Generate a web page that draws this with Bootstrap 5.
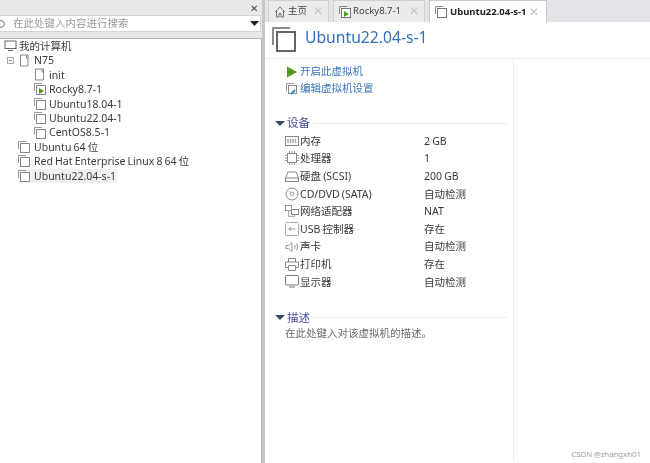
<!DOCTYPE html>
<html lang="zh"><head><meta charset="utf-8"><title>Ubuntu22.04-s-1</title>
<link href="https://cdn.jsdelivr.net/npm/bootstrap@5.3.0/dist/css/bootstrap.min.css" rel="stylesheet">
<style>
html,body{height:463px;overflow:hidden}
body{font-family:"Noto Sans","Noto Sans CJK SC",sans-serif;font-size:10.5px;line-height:14.4px;color:#3a3a3a;background:#e6e8ea;position:relative;word-spacing:-.6px}
svg{flex:none;display:block}
.shell{height:463px;filter:blur(.3px)}
.leftpane{width:262px;flex:none}
.closebar{height:15px;padding-right:4px;color:#444;font-size:10px;line-height:12px}
.searchbox{height:17px;background:#fff;border:1px solid #d2d4d6;border-left:0;margin-right:1px;color:#9a9a9a;font-size:10.5px;padding:0 1px 0 0}
.treebox{margin-top:6px;background:#fff;border:1px solid #b4b6b8;border-left:0;border-bottom:0;height:425px}
.trow{height:14.4px;white-space:nowrap}
.ind1{padding-left:4px}.ind3{padding-left:34px}.ind4{padding-left:18px}
.tg{margin-right:2px}
.tg0{margin-right:0}
.tg1{margin-right:1px}
.tlabel{margin-left:2px}
.selrow{background:#f0f0f0;width:99px;margin-left:18px}
.rightpane{width:388px;flex:none;border-left:3px solid #c4c6c8}
.tabbar{height:22px;padding-left:3px;gap:4px;background:#e2e4e7}
.tabitem{height:22px;background:#e9ebed;border:1px solid #cfd1d3;border-bottom:0;padding:0 5px;font-size:9.5px;color:#444;white-space:nowrap}
.tabactive{background:#fff;font-weight:700;color:#222;height:23px;border-color:#c8cacc;position:relative;z-index:2;padding-right:7px}
.tw1{width:61px}.tw2{width:92px}.tw3{width:118px}
.tabico{margin-right:2px}
.tabactive .tabico{margin-right:3px}
.tabx{color:#c6c6c6;font-size:12px;font-weight:400;margin-left:auto}
.mainpane{background:#fff;height:441px}
.headarea{height:37px;border-bottom:1px solid #ececec;padding:5px 0 0 7px;gap:9px}
.vmtitle{font-size:15.7px;color:#2f70b8;line-height:20px}
.bodycols{height:403px}
.infocol{width:249px;flex:none;border-right:1px solid #ececec;padding:4px 0 0 10px}
.actlink{height:17px;color:#3a76b8;gap:2px;padding-left:11px}
.secthead{color:#4b4a9e;font-size:11.5px;height:16px}
.secthead::after{content:"";flex:1;height:1px;background:#ececec;margin-left:3px;margin-right:6px}
.caret{width:0;height:0;border-left:5px solid transparent;border-right:5px solid transparent;border-top:5px solid #3c4a5c;margin-right:2px}
.devrow{height:17.65px;padding-left:10px;gap:1px}
.devname{width:123px;flex:none;white-space:nowrap}
.devico{width:14px;display:flex;justify-content:center}
.desctext{padding-left:10px;color:#6a6a6a}
.sec1{margin-top:18px}.sec2{margin-top:19px}
.devlist{margin-top:1px}
.stamp{position:absolute;right:9px;bottom:3px;font-size:7.8px;line-height:12px;color:#a0a0a0}
</style></head>
<body>
<div class="shell d-flex">
 <div class="leftpane d-flex flex-column">
  <div class="closebar d-flex justify-content-end align-items-center"><span>✕</span></div>
  <div class="searchbox d-flex align-items-center">
    <svg width="13" height="12" viewBox="0 0 13 12"><circle cx="1" cy="6" r="3.400" fill="none" stroke="#777"/></svg>
    <span>在此处键入内容进行搜索</span>
    <svg width="9" height="5" viewBox="0 0 9 5" class="ms-auto"><path d="M0 0h9L4.500 5z" fill="#222"/></svg>
  </div>
  <div class="treebox">
    <div class="trow d-flex align-items-center ind1">
      <svg class="tg1" width="14" height="12" viewBox="0 0 14 12"><rect x="1" y="1" width="11" height="7.500" fill="none" stroke="#666"/><path d="M4 10.500h5" stroke="#666"/></svg><span>我的计算机</span></div>
    <div class="trow d-flex align-items-center">
      <svg width="20" height="12" viewBox="0 0 20 12"><rect x="7.500" y="2.500" width="6" height="6" fill="none" stroke="#aaa"/><path d="M9 5.500h3" stroke="#888"/></svg>
      <svg class="tg0" width="12" height="13" viewBox="0 0 12 13"><path d="M.5 1h7.500v11H.5zM6.500 1v3H8" fill="none" stroke="#888"/></svg><span class="tlabel">N75</span></div>
    <div class="trow d-flex align-items-center ind3"><svg class="tg1" width="12" height="13" viewBox="0 0 12 13"><path d="M1.500 1h8v11h-8zM8 1v3h1.500" fill="none" stroke="#888"/></svg><span class="tlabel">init</span></div>
    <div class="trow d-flex align-items-center ind3"><svg class="tg1" width="12" height="12" viewBox="0 0 12 12"><path d="M.5 8V.5H8" fill="none" stroke="#999"/><rect x="2.500" y="2.500" width="9" height="9" fill="#fff" stroke="#888"/><path d="M5 5l5 3-5 3z" fill="#4c9a1e"/></svg><span class="tlabel">Rocky8.7-1</span></div>
    <div class="trow d-flex align-items-center ind3"><svg class="tg1" width="12" height="12" viewBox="0 0 12 12"><path d="M.5 8V.5H8" fill="none" stroke="#999"/><rect x="2.500" y="2.500" width="9" height="9" fill="#fff" stroke="#888"/></svg><span class="tlabel">Ubuntu18.04-1</span></div>
    <div class="trow d-flex align-items-center ind3"><svg class="tg1" width="12" height="12" viewBox="0 0 12 12"><path d="M.5 8V.5H8" fill="none" stroke="#999"/><rect x="2.500" y="2.500" width="9" height="9" fill="#fff" stroke="#888"/></svg><span class="tlabel">Ubuntu22.04-1</span></div>
    <div class="trow d-flex align-items-center ind3"><svg class="tg1" width="12" height="12" viewBox="0 0 12 12"><path d="M.5 8V.5H8" fill="none" stroke="#999"/><rect x="2.500" y="2.500" width="9" height="9" fill="#fff" stroke="#888"/></svg><span class="tlabel">CentOS8.5-1</span></div>
    <div class="trow d-flex align-items-center ind4"><svg class="tg" width="12" height="12" viewBox="0 0 12 12"><path d="M.5 8V.5H8" fill="none" stroke="#999"/><rect x="2.500" y="2.500" width="9" height="9" fill="#fff" stroke="#888"/></svg><span class="tlabel">Ubuntu 64 位</span></div>
    <div class="trow d-flex align-items-center ind4"><svg class="tg" width="12" height="12" viewBox="0 0 12 12"><path d="M.5 8V.5H8" fill="none" stroke="#999"/><rect x="2.500" y="2.500" width="9" height="9" fill="#fff" stroke="#888"/></svg><span class="tlabel">Red Hat Enterprise Linux 8 64 位</span></div>
    <div class="trow d-flex align-items-center selrow"><svg class="tg" width="12" height="12" viewBox="0 0 12 12"><path d="M.5 8V.5H8" fill="none" stroke="#999"/><rect x="2.500" y="2.500" width="9" height="9" fill="#fff" stroke="#888"/></svg><span class="tlabel">Ubuntu22.04-s-1</span></div>
  </div>
 </div>
 <div class="rightpane d-flex flex-column">
  <div class="tabbar d-flex">
    <div class="tabitem tw1 d-flex align-items-center"><svg class="tabico" width="12" height="12" viewBox="0 0 12 12"><path d="M1 6l5-5 5 5M2.500 5v6h2.500V7.500h2V11h2.500V5" fill="none" stroke="#777"/></svg>主页<span class="tabx">✕</span></div>
    <div class="tabitem tw2 d-flex align-items-center"><svg class="tabico" width="12" height="12" viewBox="0 0 12 12"><path d="M.5 8V.5H8" fill="none" stroke="#888"/><rect x="2.500" y="2.500" width="9" height="9" fill="#fff" stroke="#777"/><path d="M5 5l5 3-5 3z" fill="#4c9a1e"/></svg>Rocky8.7-1<span class="tabx">✕</span></div>
    <div class="tabitem tabactive tw3 d-flex align-items-center"><svg class="tabico" width="12" height="12" viewBox="0 0 12 12"><path d="M.5 8V.5H8" fill="none" stroke="#888"/><rect x="2.500" y="2.500" width="9" height="9" fill="#fff" stroke="#777"/></svg><span>Ubuntu22.04-s-1</span><span class="tabx">✕</span></div>
  </div>
  <div class="mainpane">
   <div class="headarea d-flex align-items-start">
     <svg width="24" height="25" viewBox="0 0 24 25"><path d="M1 18V1h17" fill="none" stroke="#666" stroke-width="1.500"/><rect x="5" y="5" width="18" height="19" fill="#fff" stroke="#555" stroke-width="1.800"/></svg>
     <div class="vmtitle">Ubuntu22.04-s-1</div>
   </div>
   <div class="bodycols d-flex">
    <div class="infocol">
      <div class="actlink d-flex align-items-center"><svg width="12" height="12" viewBox="0 0 12 12"><path d="M1 .5l10 5.500-10 5.500z" fill="#4c9a1e"/></svg><span>开启此虚拟机</span></div>
      <div class="actlink d-flex align-items-center"><svg width="12" height="12" viewBox="0 0 12 12"><path d="M.5 8V.5H8" fill="none" stroke="#999"/><rect x="2.500" y="2.500" width="8" height="8" fill="#fff" stroke="#888"/><path d="M5 11l4-4" stroke="#2f8fd0" stroke-width="2"/></svg><span>编辑虚拟机设置</span></div>
      <div class="sec1 secthead d-flex align-items-center"><span class="caret"></span><span>设备</span></div>
      <div class="devlist">
       <div class="devrow d-flex align-items-center"><span class="devico"><svg width="14" height="10" viewBox="0 0 14 10"><rect x=".5" y=".5" width="13" height="9" fill="none" stroke="#888"/><path d="M3 3v4M5.500 3v4M8 3v4M10.500 3v4" stroke="#aaa" stroke-width="1.500"/></svg></span><span class="devname">内存</span><span>2 GB</span></div>
       <div class="devrow d-flex align-items-center"><span class="devico"><svg width="14" height="14" viewBox="0 0 14 14"><rect x="2.500" y="2.500" width="9" height="9" fill="none" stroke="#888"/><path d="M0 4.500h2M0 7h2M0 9.500h2M12 4.500h2M12 7h2M12 9.500h2M4.500 0v2M7 0v2M9.500 0v2M4.500 12v2M7 12v2M9.500 12v2" stroke="#999"/></svg></span><span class="devname">处理器</span><span>1</span></div>
       <div class="devrow d-flex align-items-center"><span class="devico"><svg width="14" height="11" viewBox="0 0 14 11"><path d="M3 1h8l2.500 6v3.500H.5V7zM.5 7h13" fill="none" stroke="#888"/></svg></span><span class="devname">硬盘 (SCSI)</span><span>200 GB</span></div>
       <div class="devrow d-flex align-items-center"><span class="devico"><svg width="14" height="14" viewBox="0 0 14 14"><circle cx="7" cy="7" r="6" fill="none" stroke="#888"/><circle cx="7" cy="7" r="2" fill="none" stroke="#aaa"/><path d="M4 4l2 2" stroke="#aaa"/></svg></span><span class="devname">CD/DVD (SATA)</span><span>自动检测</span></div>
       <div class="devrow d-flex align-items-center"><span class="devico"><svg width="14" height="13" viewBox="0 0 14 13"><rect x=".5" y=".5" width="6" height="5" fill="none" stroke="#999"/><rect x="6.500" y="4.500" width="7" height="5" fill="none" stroke="#888"/><path d="M3.500 5.500v6h6v-2" fill="none" stroke="#aaa"/></svg></span><span class="devname">网络适配器</span><span>NAT</span></div>
       <div class="devrow d-flex align-items-center"><span class="devico"><svg width="14" height="14" viewBox="0 0 14 14"><rect x=".5" y=".5" width="13" height="13" rx="1" fill="none" stroke="#aaa"/><path d="M3.500 7h7M6 5l-2 2 2 2" fill="none" stroke="#999"/></svg></span><span class="devname">USB 控制器</span><span>存在</span></div>
       <div class="devrow d-flex align-items-center"><span class="devico"><svg width="14" height="12" viewBox="0 0 14 12"><path d="M1 4.500h2.500L7 1.500v9L3.500 7.500H1zM9.500 4c.7 1.300.7 2.700 0 4M11.500 2.500c1.300 2.300 1.300 4.700 0 7" fill="none" stroke="#999"/></svg></span><span class="devname">声卡</span><span>自动检测</span></div>
       <div class="devrow d-flex align-items-center"><span class="devico"><svg width="14" height="13" viewBox="0 0 14 13"><path d="M3.500 4V.5h7V4M3.500 9.500H.5V4h13v5.500h-3M3.500 7.500h7v5h-7z" fill="none" stroke="#888"/></svg></span><span class="devname">打印机</span><span>存在</span></div>
       <div class="devrow d-flex align-items-center"><span class="devico"><svg width="14" height="13" viewBox="0 0 14 13"><rect x=".5" y=".5" width="13" height="9.500" rx="1" fill="none" stroke="#777"/><path d="M4 12h6" stroke="#777"/></svg></span><span class="devname">显示器</span><span>自动检测</span></div>
      </div>
      <div class="sec2 secthead d-flex align-items-center"><span class="caret"></span><span>描述</span></div>
      <div class="desctext">在此处键入对该虚拟机的描述。</div>
    </div>
   </div>
  </div>
 </div>
</div>
<div class="stamp">CSDN @zhangxh01</div>
<script src="https://cdn.jsdelivr.net/npm/bootstrap@5.3.0/dist/js/bootstrap.bundle.min.js"></script>
</body></html>
